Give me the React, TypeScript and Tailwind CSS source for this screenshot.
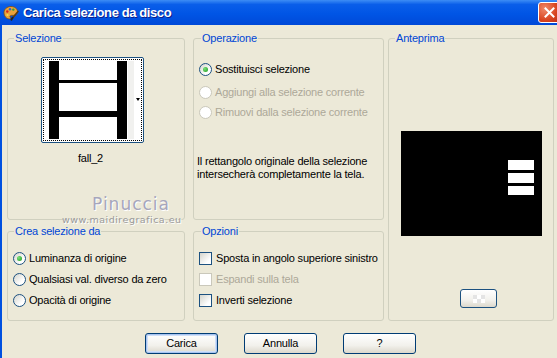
import React from "react";

function Radio({ checked, disabled }: { checked?: boolean; disabled?: boolean }) {
  return (
    <span
      className={`flex h-[13px] w-[13px] shrink-0 items-center justify-center rounded-full border ${
        disabled
          ? "border-[#cac8bb] bg-white"
          : "border-[#1c5180] bg-[linear-gradient(135deg,#d4d4cc,#ffffff_70%)]"
      }`}
    >
      {checked && <span className="h-[5px] w-[5px] rounded-full bg-[radial-gradient(circle_at_35%_35%,#7be07b,#1a9a1a)]" />}
    </span>
  );
}

function Check({ disabled }: { disabled?: boolean }) {
  return (
    <span
      className={`block h-[13px] w-[13px] shrink-0 border ${
        disabled
          ? "border-[#cac8bb] bg-white"
          : "border-[#1c5180] bg-[linear-gradient(135deg,#d4d4cc,#ffffff_75%)]"
      }`}
    />
  );
}

function Group({
  label,
  className,
  legendMl,
  children,
}: {
  label: string;
  className: string;
  legendMl: string;
  children?: React.ReactNode;
}) {
  return (
    <fieldset className={`rounded-[3px] border border-[#d0d0bf] ${className}`}>
      <legend className={`${legendMl} px-[1px] leading-[13px] text-[#0046d5]`}>{label}</legend>
      {children}
    </fieldset>
  );
}

function XpButton({ label, def }: { label: string; def?: boolean }) {
  return (
    <div
      className={`flex h-[21px] w-[73px] items-center justify-center rounded-[3px] border border-[#003c74] bg-[linear-gradient(to_bottom,#ffffff,#f2f1ec_60%,#dcd8cc)] ${
        def ? "shadow-[inset_0_0_0_1px_#a8c4f0,inset_0_0_0_2px_#cfdff8]" : ""
      }`}
    >
      {label}
    </div>
  );
}

export default function App() {
  return (
    <div className="relative h-[358px] w-[557px] overflow-hidden whitespace-nowrap bg-[#ece9d8] font-['Liberation_Sans',Arial,sans-serif] text-[11px] tracking-[-0.2px] text-black">
      {/* title bar */}
      <div className="flex h-[25px] items-center bg-[linear-gradient(to_bottom,#3d8df5,#0a5ee9_18%,#0055e5_55%,#0049d8)]">
        <svg width="16" height="16" viewBox="0 0 16 16" className="ml-[3px]">
          <path d="M8 1.5C3.8 1.5 1 4.3 1 7.8c0 3.4 2.6 6.2 5.4 6.2 1.3 0 1.4-1 .8-1.8-.6-.9 0-1.8 1.2-1.8h2c2.5 0 4.1-1.7 4.1-3.9C14.5 3.8 11.6 1.5 8 1.5z" fill="#e9a33c" stroke="#7a4a12" strokeWidth="0.8" />
          <circle cx="4.3" cy="6.5" r="1.2" fill="#d8261c" />
          <circle cx="7" cy="4.2" r="1.2" fill="#2b63d6" />
          <circle cx="10.3" cy="4.6" r="1.2" fill="#2ea13a" />
          <circle cx="4.5" cy="10" r="1.1" fill="#f4e04a" />
          <path d="M15 6.5 9.5 13" stroke="#5a3a10" strokeWidth="1.6" strokeLinecap="round" />
          <path d="M9.6 12.8 8.4 14.6" stroke="#222" strokeWidth="2" strokeLinecap="round" />
        </svg>
        <span className="ml-[4px] text-[13px] font-bold tracking-[-0.4px] text-white [text-shadow:1px_1px_0_#0a1e8c]">
          Carica selezione da disco
        </span>
        <div className="ml-auto mr-[-3px] flex h-[21px] w-[22px] items-center justify-center rounded-[3px] border border-white bg-[radial-gradient(circle_at_30%_30%,#f08a6a,#d8431f_60%,#b8301a)]">
          <svg width="11" height="11" viewBox="0 0 11 11">
            <path d="M1.5 1.5 9.5 9.5M9.5 1.5 1.5 9.5" stroke="white" strokeWidth="2" strokeLinecap="square" />
          </svg>
        </div>
      </div>

      {/* client area */}
      <div className="flex h-[333px] flex-col border-l-2 border-[#0050e0] pl-[5px] pt-[7px]">
        <div className="flex">
          <div className="flex w-[178px] flex-col">
            <Group label="Selezione" legendMl="ml-[6px]" className="h-[188px]">
              <div className="ml-[33px] mt-[12px] flex w-[103px] flex-col">
                <div className="relative h-[86px] w-[103px] rounded-[2px] border border-[#1c5180] bg-white p-[1px]">
                  <div className="h-full w-full border border-dotted border-black p-[1px]">
                    <div className="flex h-full w-[90px] flex-col justify-start bg-white pl-[4px]">
                      <div className="flex h-full">
                        <div className="h-full w-[10px] bg-black" />
                        <div className="flex h-full w-[58px] flex-col">
                          <div className="h-[19px]" />
                          <div className="h-[3px] bg-black" />
                          <div className="h-[28px]" />
                          <div className="h-[6px] bg-black" />
                        </div>
                        <div className="h-full w-[10px] bg-black" />
                        <div className="ml-[1px] h-full w-[6px] bg-[#f1f1ef]" />
                      </div>
                    </div>
                  </div>
                  <div className="absolute right-[3px] top-[40px] h-0 w-0 border-x-[2px] border-t-[3px] border-x-transparent border-t-black" />
                </div>
                <div className="mt-[9px] pr-[4px] text-center leading-[13px]">fall_2</div>
              </div>
            </Group>
            <Group label="Crea selezione da" legendMl="ml-[6px]" className="mt-[5px] h-[96px]">
              <div className="mt-[10px] flex flex-col pl-[5px]">
                <div className="flex h-[21px] items-center gap-[3px]">
                  <Radio checked />
                  <span>Luminanza di origine</span>
                </div>
                <div className="flex h-[21px] items-center gap-[3px]">
                  <Radio />
                  <span>Qualsiasi val. diverso da zero</span>
                </div>
                <div className="flex h-[21px] items-center gap-[3px]">
                  <Radio />
                  <span>Opacità di origine</span>
                </div>
              </div>
            </Group>
          </div>

          <div className="ml-[8px] flex w-[191px] flex-col">
            <Group label="Operazione" legendMl="ml-[7px]" className="h-[188px]">
              <div className="flex flex-col pl-[5px]">
                <div className="mt-[14px] flex h-[20px] items-center gap-[3px]">
                  <Radio checked />
                  <span>Sostituisci selezione</span>
                </div>
                <div className="mt-[3px] flex h-[20px] items-center gap-[3px] text-[#aca899]">
                  <Radio disabled />
                  <span>Aggiungi alla selezione corrente</span>
                </div>
                <div className="flex h-[20px] items-center gap-[3px] text-[#aca899]">
                  <Radio disabled />
                  <span>Rimuovi dalla selezione corrente</span>
                </div>
                <p className="-ml-[2px] mt-[33px] leading-[13px]">
                  Il rettangolo originale della selezione
                  <br />
                  intersecherà completamente la tela.
                </p>
              </div>
            </Group>
            <Group label="Opzioni" legendMl="ml-[7px]" className="mt-[5px] h-[96px]">
              <div className="mt-[10px] flex flex-col pl-[5px]">
                <div className="flex h-[21px] items-center gap-[4px]">
                  <Check />
                  <span>Sposta in angolo superiore sinistro</span>
                </div>
                <div className="flex h-[21px] items-center gap-[4px] text-[#aca899]">
                  <Check disabled />
                  <span>Espandi sulla tela</span>
                </div>
                <div className="flex h-[21px] items-center gap-[4px]">
                  <Check />
                  <span>Inverti selezione</span>
                </div>
              </div>
            </Group>
          </div>

          <div className="ml-[4px] w-[166px]">
            <Group label="Anteprima" legendMl="ml-[6px]" className="h-[289px]">
              <div className="mx-auto mt-[86px] flex h-[105px] w-[141px] flex-col gap-[3px] bg-black pl-[107px] pt-[29px]">
                <div className="h-[10px] w-[26px] bg-white" />
                <div className="h-[10px] w-[26px] bg-white" />
                <div className="h-[9px] w-[26px] bg-white" />
              </div>
              <div className="ml-[71px] mt-[53px] flex h-[19px] w-[37px] items-center justify-center rounded-[3px] border border-[#1c5180] bg-[linear-gradient(to_bottom,#ffffff,#f2f1ec_60%,#dcd8cc)]">
                <div className="grid grid-cols-3">
                  <div className="h-[4px] w-[4px] bg-[#e4e4e4]" />
                  <div className="h-[4px] w-[4px] bg-white" />
                  <div className="h-[4px] w-[4px] bg-[#e4e4e4]" />
                  <div className="h-[4px] w-[4px] bg-white" />
                  <div className="h-[4px] w-[4px] bg-[#e4e4e4]" />
                  <div className="h-[4px] w-[4px] bg-white" />
                </div>
              </div>
            </Group>
          </div>
        </div>

        <div className="ml-[138px] mt-[12px] flex gap-[26px]">
          <XpButton label="Carica" def />
          <XpButton label="Annulla" />
          <XpButton label="?" />
        </div>
      </div>

      {/* watermark */}
      <div className="pointer-events-none absolute left-[92px] top-[196px] font-['DejaVu_Sans',sans-serif] text-[17px] leading-none tracking-[1px] text-[#a6a6bc] [text-shadow:1px_1px_0_#ffffff]">
        Pinuccia
      </div>
      <div className="pointer-events-none absolute left-[62px] top-[215px] font-['DejaVu_Sans',sans-serif] text-[9.5px] leading-none tracking-[0.5px] text-[#9a9a9a] [text-shadow:1px_1px_0_#ffffff]">
        www.maidiregrafica.eu
      </div>
    </div>
  );
}
